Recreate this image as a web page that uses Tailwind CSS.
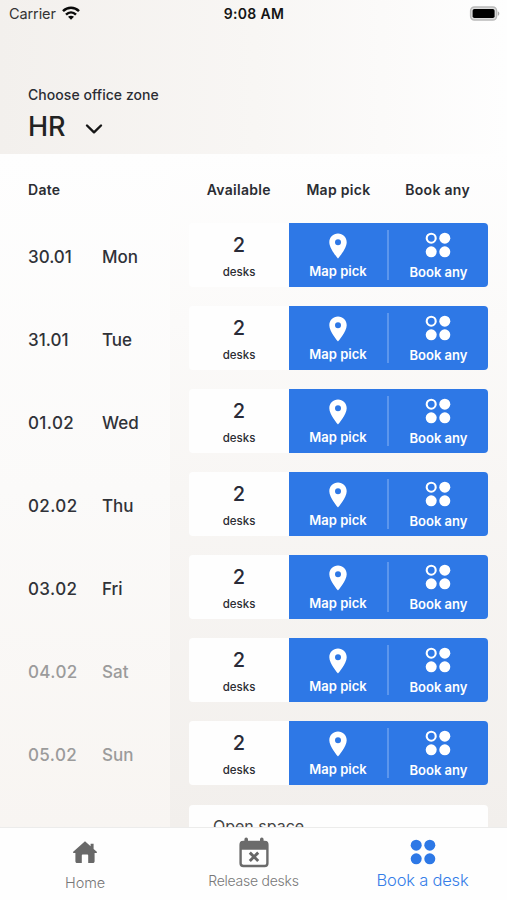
<!DOCTYPE html>
<html lang="en">
<head>
<meta charset="utf-8">
<title>Book a desk</title>
<script src="https://cdn.jsdelivr.net/npm/@tailwindcss/browser@4"></script>
</head>
<body class="w-[507px] h-[900px] overflow-hidden font-['Inter',sans-serif] text-[#2b2d33] bg-white">
<div class="flex flex-col w-[507px] h-[900px] overflow-hidden">
  <header class="h-[154px] shrink-0 bg-linear-to-r from-[#f3f0ed] via-[#f8f6f4] to-[#fefefe]">
    <div class="grid grid-cols-3 items-center h-7 pl-[9px] pr-[7px] text-[#141414]">
      <div class="flex items-center gap-[6px]">
        <span class="text-[14.5px] leading-5 tracking-[-0.1px] text-[#333]">Carrier</span>
        <svg class="w-[18px] h-[14px] -mt-[2px]" viewBox="0 0 18 14" fill="none" stroke="#0a0a0a" stroke-width="2.5"><path d="M1 5.2C5.6.7 12.4.7 17 5.2M4 8.6c3-2.9 7-2.9 10 0"/><path d="M9 13.8 6 10.8c1.7-1.5 4.3-1.5 6 0Z" fill="#0a0a0a" stroke="none"/></svg>
      </div>
      <span class="text-center text-[14px] leading-5 font-semibold tracking-[0.35px] -ml-[1px]">9:08 AM</span>
      <svg class="justify-self-end w-[31px] h-[15px] -mt-[2px]" viewBox="0 0 31 15"><rect x="1.6" y="1" width="26" height="13" rx="3.8" fill="#ddd" stroke="#b9b9b9" stroke-width="1.4"/><rect x="3.6" y="3" width="22" height="9" rx="1.8" fill="#000"/><path d="M28.8 5.2c2 .8 2 3.8 0 4.6Z" fill="#aaa"/></svg>
    </div>
    <div class="pl-7 pt-[57px]">
      <div class="text-[14px] leading-5 font-medium tracking-[0.05px]">Choose office zone</div>
      <div class="flex items-center h-[42px] gap-[19px]">
        <span class="text-[27px] leading-8 font-medium text-[#222] pt-[1px]">HR</span>
        <svg class="w-[18px] h-3 mt-[5px]" viewBox="0 0 18 12" fill="none" stroke="#161616" stroke-width="2.4" stroke-linecap="round" stroke-linejoin="round"><path d="m2 2.5 7 6.8 7-6.8"/></svg>
      </div>
    </div>
  </header>

  <main class="flex flex-1 min-h-0 overflow-hidden">
    <section class="w-[170px] shrink-0 pl-7 bg-linear-to-b from-[#fefefe] via-[#fbfaf9] to-[#f8f5f2]">
      <div class="h-[69px] pt-[26px] text-[14px] leading-5 font-semibold tracking-[0.3px]">Date</div>
      <div id="dates"></div>
    </section>
    <section class="flex-1 pl-[19px] bg-linear-to-b from-[#fefefe] via-[#f8f6f4] to-[#f2efec]">
      <div class="grid grid-cols-3 w-[299px] h-[69px] pt-[26px] text-center text-[14px] leading-5 font-semibold tracking-[0.3px]">
        <span>Available</span><span>Map pick</span><span class="-ml-[1px]">Book any</span>
      </div>
      <div id="desks" class="flex flex-col gap-[19px] w-[299px]"></div>
      <div class="mt-[19.5px] w-[299px] h-16 rounded-[4px] bg-[#fefefe] pl-6 pt-[10px] text-[16px] leading-[22px] text-[#444]">Open space</div>
    </section>
  </main>

  <nav class="grid grid-cols-3 h-[73px] shrink-0 bg-[#fefefe] border-t border-[#ececeb] text-center text-[#969696]">
    <div class="flex flex-col items-center pt-3">
      <svg class="w-[26px] h-[25px]" viewBox="0 0 26 25"><path d="M13 1.2 1.2 11.8c-.5.6-.2 1.2.5 1.2h1.7v8.2c0 1.2.6 1.8 1.8 1.8H9.8v-7.6q0-.8.8-.8h4.8q.8 0 .8.8V23h4.6c1.2 0 1.8-.6 1.8-1.8V13h1.7c.7 0 1-.6.5-1.2l-3.2-2.9V3.7h-3v2.5Z" fill="#686868"/></svg>
      <span class="mt-[8px] ml-[1px] text-[14.5px] leading-5 font-light tracking-[-0.1px] text-[#777]">Home</span>
    </div>
    <div class="flex flex-col items-center pt-[9px]">
      <svg class="w-[30px] h-[31px]" viewBox="0 0 30 31" fill="none"><rect x="1.6" y="5" width="26.8" height="24" rx="2.8" stroke="#6b6b6b" stroke-width="2.4"/><path d="M1 12.8V6.8Q1 4 4 4h22q3 0 3 2.8v6Z" fill="#6b6b6b"/><path d="M7.2 2.4v4M22.8 2.4v4" stroke="#6b6b6b" stroke-width="3.6" stroke-linecap="round"/><path d="m10.8 15.6 8.4 8.4m0-8.4-8.4 8.4" stroke="#666" stroke-width="2.9"/></svg>
      <span class="mt-[3px] text-[14px] leading-5 font-light tracking-[-0.25px] text-[#777]">Release desks</span>
    </div>
    <div class="flex flex-col items-center pt-3 text-[#347de8]">
      <svg class="w-[26px] h-[26px] -mt-[1px]" viewBox="0 0 26 26" fill="#2d78e6"><circle cx="6.2" cy="6.2" r="5.5"/><circle cx="19.8" cy="6.2" r="5.5"/><circle cx="6.2" cy="19.8" r="5.5"/><circle cx="19.8" cy="19.8" r="5.5"/></svg>
      <span class="mt-[3px] text-[16.5px] leading-6 font-light tracking-[-0.2px]">Book a desk</span>
    </div>
  </nav>
</div>
<script>
const days = [['30.01','Mon'],['31.01','Tue'],['01.02','Wed'],['02.02','Thu'],['03.02','Fri'],['04.02','Sat'],['05.02','Sun']];
document.getElementById('dates').innerHTML = days.map(([date, day], i) => `
  <div class="flex items-center h-16 pt-[3px] mb-[19px] text-[17px] leading-6 font-medium ${i > 4 ? 'text-[#9b9b9b]' : 'text-[#303238]'}">
    <span class="w-[74px] ${i > 1 ? 'tracking-[0.4px]' : ''}">${date}</span><span>${day}</span>
  </div>`).join('');
document.getElementById('desks').innerHTML = days.map(() => `
  <div class="flex h-16 rounded-[4px] overflow-hidden">
    <div class="w-[100px] bg-[#fefefe] flex flex-col items-center pt-[10px]">
      <span class="text-[20px] leading-6 font-medium text-[#292b38]">2</span>
      <span class="mt-[7px] text-[11.5px] leading-4 font-medium">desks</span>
    </div>
    <div class="flex-1 flex bg-[#2e78e6] text-white text-[13px] leading-[18px] font-semibold">
      <div class="flex flex-col items-center w-[98px] pt-[10px]">
        <svg class="w-[18px] h-[26px]" viewBox="0 0 18 26"><path fill-rule="evenodd" d="M9 .5C4.2.5.3 4.3.3 9.2.3 15.7 9 25.5 9 25.5s8.7-9.8 8.7-16.3C17.7 4.3 13.8.5 9 .5Zm0 5.8a3 3 0 1 1 0 6 3 3 0 0 1 0-6Z" fill="#fff"/></svg>
        <span class="mt-[3px]">Map pick</span>
      </div>
      <div class="w-[2px] h-[50px] mt-[7px] bg-[#5c96ed]"></div>
      <div class="flex flex-col items-center w-[99px] pt-[9px]">
        <svg class="w-[26px] h-[26px] -ml-[1px]" viewBox="0 0 26 26" fill="#fff"><circle cx="6.2" cy="6.2" r="4.5" fill="none" stroke="#fff" stroke-width="2.1"/><circle cx="19.8" cy="6.2" r="5.5"/><circle cx="6.2" cy="19.8" r="5.5"/><circle cx="19.8" cy="19.8" r="5.5"/></svg>
        <span class="mt-[5px]">Book any</span>
      </div>
    </div>
  </div>`).join('');
</script>
</body>
</html>
